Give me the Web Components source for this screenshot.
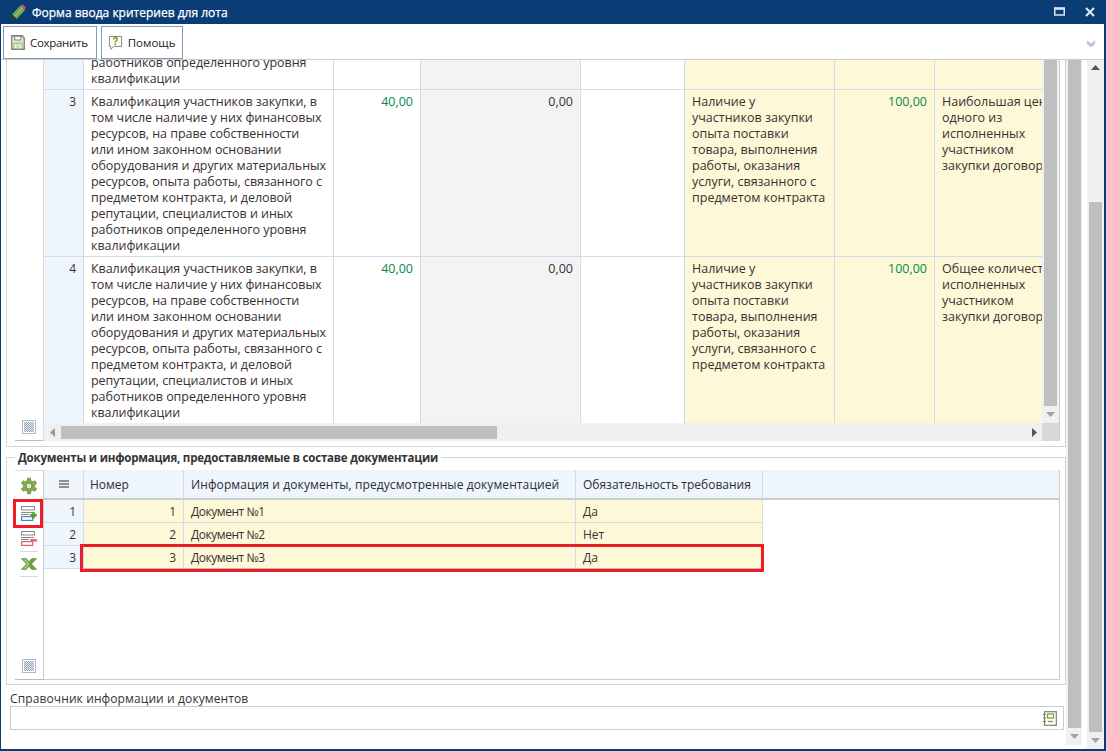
<!DOCTYPE html>
<html lang="ru"><head><meta charset="utf-8"><title>Форма ввода критериев для лота</title>
<style>
html,body{margin:0;padding:0;background:#fff}
body{font:12px/16px "Open Sans","Noto Sans",sans-serif;color:#333}
</style></head><body>
<app-window>
  <title-bar slot="title">Форма ввода критериев для лота</title-bar>
  <tool-bar slot="toolbar">
    <tool-button icon="save" style="--ls:-.3px;--fs:11.5px;--pl:7px;--pr:8px">Сохранить</tool-button>
    <tool-button icon="help" style="--ls:0;--fs:11.5px;--pl:6px;--pr:7px">Помощь</tool-button>
  </tool-bar>
  <criteria-panel slot="main"></criteria-panel>
  <docs-panel slot="main" legend="Документы и информация, предоставляемые в составе документации"></docs-panel>
  <lookup-field slot="main" label="Справочник информации и документов"></lookup-field>
  <v-scroll slot="mid" style="--h:685px;--w:16px" thumb="668" bottom></v-scroll>
  <v-scroll slot="outer" style="--h:689px;--w:17px" top thumb="531" offset="127" bottom></v-scroll>
</app-window>
<script>
const ICONS={
pencil:`<svg width="16" height="17" viewBox="0 0 16 17"><path d="M2.500 10.500 10.500 2 14.500 6 6.500 14.500z" fill="#6fa046" stroke="#dfe9d2" stroke-width=".5"/><path d="M4.500 12.500 12.500 4" stroke="#9cc46e" stroke-width="1.500"/><path d="M10.500 2 12.800 .5 15.800 3.500 14.500 6z" fill="#c95a6a"/><path d="M2.500 10.500 6.500 14.500 1 16.500z" fill="#2c3a30"/></svg>`,
save:`<svg width="14" height="15" viewBox="0 0 15 15" preserveAspectRatio="none"><path d="M.8.8H12L14.200 3V14.200H.8z" fill="#dcebc8" stroke="#7d7d7d" stroke-width="1.400"/><path d="M4 1.200H10.500V5H4z" fill="#fff" stroke="#7d7d7d"/><path d="M3.200 8.200H11.800V13.800H3.200z" fill="#fff" stroke="#8db264"/><path d="M5 10H10M5 12H10" stroke="#9cbc78"/></svg>`,
help:`<svg width="15" height="16" viewBox="0 0 16 16" preserveAspectRatio="none"><path d="M1.500 1.500H14.500V11.500H6L3 14.500V11.500H1.500z" fill="#fbfbf6" stroke="#858585"/><text x="8" y="10" text-anchor="middle" font-family="Liberation Sans" font-weight="700" font-size="10" fill="#5b9a12">?</text></svg>`,
gear:`<svg width="18" height="18" viewBox="0 0 18 18"><g fill="#7ba24c"><rect x="7" y=".8" width="4" height="16.400" rx=".6"/><rect x="7" y=".8" width="4" height="16.400" rx=".6" transform="rotate(60 9 9)"/><rect x="7" y=".8" width="4" height="16.400" rx=".6" transform="rotate(120 9 9)"/></g><circle cx="9" cy="9" r="6.200" fill="#84aa55"/><circle cx="9" cy="9" r="3" fill="#dce6d0" stroke="#6d9440"/></svg>`,
add:`<svg width="16" height="15" viewBox="0 0 16 15"><rect x=".5" y=".5" width="13" height="3.500" fill="#fff" stroke="#8b8b8b"/><path d="M0 6.500H13M0 8.500H8" stroke="#8b8b8b"/><rect x=".6" y="10.600" width="11" height="3.800" fill="#fff" stroke="#3c8cc4" stroke-width="1.200"/><path d="M12.500 6V12.500M9.300 9.300H15.800" stroke="#5b9a24" stroke-width="2.400"/></svg>`,
del:`<svg width="16" height="15" viewBox="0 0 16 15"><rect x=".5" y=".5" width="13" height="3.500" fill="#fff" stroke="#8b8b8b"/><path d="M0 6.500H13M0 8.500H8" stroke="#8b8b8b"/><rect x=".6" y="10.600" width="11" height="3.800" fill="#fff" stroke="#e2606e" stroke-width="1.200"/><path d="M9.300 9.300H16" stroke="#e2606e" stroke-width="2.400"/></svg>`,
excel:`<svg width="16" height="12" viewBox="0 0 16 12"><path d="M.3 .5H5.300L8 3.800 10.700 .5H15.700L10.500 6 15.700 11.500H10.700L8 8.200 5.300 11.500H.3L5.500 6z" fill="#6fa03a" stroke="#4f8023" stroke-width=".5"/><path d="M2.500 1.500H5L8.500 6 5 10.500H2.500L6.500 6z" fill="#a9c985"/></svg>`,
grid:`<svg width="14" height="14" viewBox="0 0 14 14"><defs><pattern id="d" width="2" height="2" patternUnits="userSpaceOnUse"><rect width="2" height="2" fill="#e4e7ee"/><rect width="1" height="1" fill="#9ba5b8"/><rect x="1" y="1" width="1" height="1" fill="#9ba5b8"/></pattern></defs><rect x=".5" y=".5" width="13" height="13" fill="#fff" stroke="#a9bbd3"/><rect x="2" y="2" width="10" height="10" fill="url(#d)"/></svg>`,
book:`<svg width="14" height="15" viewBox="0 0 14 15"><rect x="1.500" y=".7" width="11.800" height="13.600" fill="#fff" stroke="#7f7f7f" stroke-width="1.200"/><path d="M0 3.500H3M0 7H3M0 10.500H3" stroke="#7f7f7f"/><rect x="4.500" y="3" width="6" height="4" fill="#fff" stroke="#79a72c" stroke-width="1.300"/><path d="M5 10.500H10" stroke="#79a72c" stroke-width="1.300"/></svg>`,
menu:`<svg width="10" height="8" viewBox="0 0 10 8"><path d="M0 1H10M0 4H10M0 7H10" stroke="#6d6d6d" stroke-width="1.500"/></svg>`
};
function def(name,css,html){
  customElements.define(name,class extends HTMLElement{
    constructor(){super();this.attachShadow({mode:"open"});this._h=html;this._c=css;}
    connectedCallback(){
      if(!this._i){this._i=1;this.shadowRoot.innerHTML=`<style>${this._c}</style>`+(typeof this._h==="function"?this._h(this):this._h);}
    }
  });
}
def("app-window",`
:host{display:flex;flex-direction:column;width:1106px;height:751px;box-sizing:border-box;border:solid #0a3d75;border-width:0 2px 2px 1px;overflow:hidden;background:#fff}
.body{flex:1;display:flex;min-height:0}
.main{width:1065px;flex:none;box-sizing:border-box;padding-left:5px;display:flex;flex-direction:column}
.gap{width:5px}
`,`<slot name="title"></slot><slot name="toolbar"></slot>
<div class="body"><div class="main"><slot name="main"></slot></div><slot name="mid"></slot><div class="gap"></div><slot name="outer"></slot></div>`);
def("title-bar",`
:host{display:flex;align-items:center;height:24px;box-sizing:border-box;flex:none;background:#0a3d75;color:#fff;margin:0 -2px 0 -1px;padding:1px 0 0 10px;font-weight:400;font-size:12px}
.t{margin-left:6px;-webkit-text-stroke:.25px #fff}
.btns{margin-left:auto;display:flex;align-items:center;gap:20px;padding-right:11px;margin-top:-2px}
`,`${ICONS.pencil}<span class="t"><slot></slot></span><span class="btns">
<svg width="11" height="9" viewBox="0 0 11 9"><rect x=".75" y="1.500" width="9.500" height="6.500" fill="none" stroke="#dbe6f1" stroke-width="1.500"/><path d="M0 1.500H11" stroke="#dbe6f1" stroke-width="2.500"/></svg>
<svg width="10" height="10" viewBox="0 0 10 10"><path d="M1 1 9 9M9 1 1 9" stroke="#dbe6f1" stroke-width="2.200"/></svg></span>`);
def("tool-bar",`
:host{display:flex;align-items:flex-start;flex:none;height:36px;box-sizing:border-box;padding:2px 0 0 2px;gap:4px;border-bottom:1px solid #ccc}
svg{margin:14px 8px 0 auto}
`,`<slot></slot><svg width="10" height="7" viewBox="0 0 10 7"><path d="M1 1 5 4.500 9 1M1 3 5 6.500 9 3" fill="none" stroke="#b6c3d8" stroke-width="1.500"/></svg>`);
def("tool-button",`
:host{display:inline-flex;align-items:center;height:33px;box-sizing:border-box;border:1px solid #7f9db9;padding:0 var(--pr) 0 var(--pl);gap:5px;color:#222;font-size:var(--fs);letter-spacing:var(--ls)}
`,h=>`${ICONS[h.getAttribute("icon")]}<span><slot></slot></span>`);
def("v-scroll",`
:host{display:flex;flex-direction:column;width:var(--w);height:var(--h);flex:none;background:#f0f0f0;box-sizing:border-box}
.th{background:#bfbfbf;margin:0 auto;width:13px}
.ar{height:17px;display:flex;align-items:center;justify-content:center;flex:none}
.sp{flex:1}
`,h=>{const off=+h.getAttribute("offset")||0,t=+h.getAttribute("thumb");
return `${h.hasAttribute("top")?`<div class="ar" style="height:15px"><svg width="9" height="5"><path d="M0 5H9L4.500 0z" fill="#555"/></svg></div>`:""}
<div style="height:${off}px"></div><div class="th" style="height:${t}px"></div><div class="sp"></div>
${h.hasAttribute("bottom")?`<div class="ar"><svg width="9" height="5"><path d="M0 0H9L4.500 5z" fill="#a3a3a3"/></svg></div>`:""}`});
def("h-scroll",`
:host{display:flex;align-items:center;height:18px;background:#f0f0f0;flex:none}
.th{background:#bfbfbf;height:13px;width:436px;margin-left:6px;margin-top:1px}
svg.l{margin-left:6px}
svg.r{margin-left:auto;margin-right:5px}
`,`<svg class="l" width="5" height="9"><path d="M5 0V9L0 4.500z" fill="#999"/></svg><div class="th"></div><svg class="r" width="5" height="9"><path d="M0 0V9L5 4.500z" fill="#555"/></svg>`);
const NAME=["Квалификация участников закупки, в","том числе наличие у них финансовых","ресурсов, на праве собственности","или ином законном основании","оборудования и других материальных","ресурсов, опыта работы, связанного с","предметом контракта, и деловой","репутации, специалистов и иных","работников определенного уровня","квалификации"].join("<br>");
const REQ=["Наличие у","участников закупки","опыта поставки","товара, выполнения","работы, оказания","услуги, связанного с","предметом контракта"].join("<br>");
function critRow(n,last){return `
<div class="c n">${n}</div><div class="c nm">${NAME}</div><div class="c r g">40,00</div><div class="c r b">0,00</div><div class="c"></div>
<div class="c y">${REQ}</div><div class="c y r g">100,00</div><div class="c y l">${last.join("<br>")}</div>`;}
def("criteria-panel",`
:host{display:flex;height:387px;flex:none;width:1060px;box-sizing:border-box;border:solid #d4d4d4;border-width:0 1px 1px 1px;padding-bottom:5px;padding-right:5px}
.rail{width:36px;flex:none;border-right:1px solid #ddd;display:flex;flex-direction:column;align-items:flex-end}
.rail .ic{margin:auto 7px 6px 0;height:14px}
.rail .ln{height:1px;width:28px;background:#bbb}
.wrap{flex:1;min-width:0;display:flex;flex-direction:column;border:solid #ccc;border-width:0 1px 1px 0}
.top{display:flex;height:363px;flex:none}
.gridbox{flex:1;min-width:0;overflow:hidden}
.sb{width:17px;flex:none}
.g0{display:grid;grid-template-columns:40px 250px 87px 160px 104px 150px 100px 150px;grid-template-rows:30px 167px 167px;width:1041px;font-size:12.5px}
.c{box-sizing:border-box;border:solid #d3dce8;border-width:0 1px 1px 0;padding:4px 7px 2px;white-space:nowrap;overflow:hidden;color:#3a3033}
.nm{letter-spacing:-.05px}
.n{background:#eef6fb;text-align:right;font-size:12px}
.r{text-align:right}.g{color:#0a8a4a;font-size:12.5px}.b{background:#f3f3f3;color:#333}.y{background:#fdf8d8}
.top0{padding-top:0;padding-bottom:0}.top0>div{margin-top:-5px}
.bot{display:flex}
h-scroll{flex:1}
.corner{width:17px;height:18px;background:#d8d8d8}
`,`<div class="rail"><span class="ic">${ICONS.grid}</span><div class="ln"></div></div>
<div class="wrap"><div class="top"><div class="gridbox"><div class="g0">
<div class="c n"></div><div class="c top0 nm"><div>работников определенного уровня<br>квалификации</div></div><div class="c"></div><div class="c b"></div><div class="c"></div><div class="c y"></div><div class="c y"></div><div class="c y"></div>
${critRow(3,["Наибольшая цена","одного из","исполненных","участником","закупки договора"])}
${critRow(4,["Общее количество","исполненных","участником","закупки договоров"])}
</div></div><v-scroll class="sb" style="--h:363px;--w:17px" thumb="347" bottom></v-scroll></div>
<div class="bot"><h-scroll></h-scroll><div class="corner"></div></div></div>`);
const DOCROWS=[[1,"Документ №1","Да"],[2,"Документ №2","Нет"],[3,"Документ №3","Да"]];
def("docs-panel",`
:host{display:block;width:1060px;flex:none;margin-top:1px}
fieldset{margin:0;border:1px solid #d4d4d4;padding:4px 5px 4px 8px;height:237px;box-sizing:border-box;min-width:0}
legend{font-weight:700;font-size:11.5px;margin-left:0;padding:2px 3px 0;color:#333;letter-spacing:-.2px;line-height:16px}
.in{display:flex;height:210px}
.rail{width:28px;flex:none;border-right:1px solid #ccc;border-top:1px solid #ddd;display:flex;flex-direction:column;align-items:center;position:relative}
.rail .i{display:block;line-height:0}
.gear{margin-top:6px}.add{margin-top:11px}.del{margin-top:10px}
.sep{height:1px;width:18px;background:#d8d8d8;flex:none}
.xl{margin-top:6px;margin-bottom:6px}
.mark{position:absolute;left:-2px;top:28px;width:30px;height:29px;box-sizing:border-box;border:3px solid #ee1c25}
.bi{margin-top:auto;margin-bottom:7px}
.ln{position:absolute;bottom:0;left:0;right:-1px;height:1px;background:#bbb}
.view{flex:1;min-width:0;border:solid #ccc;border-width:0 1px 1px 0;position:relative;display:grid;grid-template-columns:40px 100px 392px 187px 1fr;grid-template-rows:30px 23px 23px 23px 1fr}
.c{box-sizing:border-box;padding:4px 7px 2px;border:solid #d3dce8;border-width:0 1px 1px 0;white-space:nowrap;overflow:hidden;color:#3a3033;background:#fdf8d8}
.h{background:#eef6fb;border-bottom:2px solid #ccc;padding-top:7px;color:#2c2c3a}
.num{padding-left:6px}
.wide{letter-spacing:.1px}
.n{background:#eef6fb;text-align:right}
.r{text-align:right}
.m{display:flex;align-items:center;justify-content:center;padding:0}
.f{border-right:0}
.doc{letter-spacing:-.45px}
.sel{border-bottom-color:#bbb}
.hl{position:absolute;left:36px;top:74px;width:684px;height:28px;box-sizing:border-box;border:3px solid #ee1c25}
`,h=>`<fieldset><legend>${h.getAttribute("legend")}</legend><div class="in">
<div class="rail"><span class="i gear">${ICONS.gear}</span><span class="i add">${ICONS.add}</span><span class="i del">${ICONS.del}</span><div class="sep" style="margin-top:5px"></div><span class="i xl">${ICONS.excel}</span><div class="sep"></div><span class="i bi">${ICONS.grid}</span><div class="ln"></div><div class="mark"></div></div>
<div class="view">
<div class="c h m">${ICONS.menu}</div><div class="c h num">Номер</div><div class="c h wide">Информация и документы, предусмотренные документацией</div><div class="c h">Обязательность требования</div><div class="c h f"></div>
${DOCROWS.map((r,i)=>{const s=i==2?" sel":"";return `<div class="c n">${r[0]}</div><div class="c r${s}">${r[0]}</div><div class="c doc${s}">${r[1]}</div><div class="c${s}">${r[2]}</div><div></div>`}).join("")}
<div class="hl"></div>
</div></div></fieldset>`);
def("lookup-field",`
:host{display:block;width:1054px;margin-left:4px;margin-top:6px;flex:none}
.l{line-height:15px;color:#333;display:block;letter-spacing:.11px}
.b{height:24px;box-sizing:border-box;border:1px solid #ccc;display:flex;align-items:center;justify-content:flex-end;padding-right:6px}
`,h=>`<span class="l">${h.getAttribute("label")}</span><div class="b">${ICONS.book}</div>`);
</script>
</body></html>
